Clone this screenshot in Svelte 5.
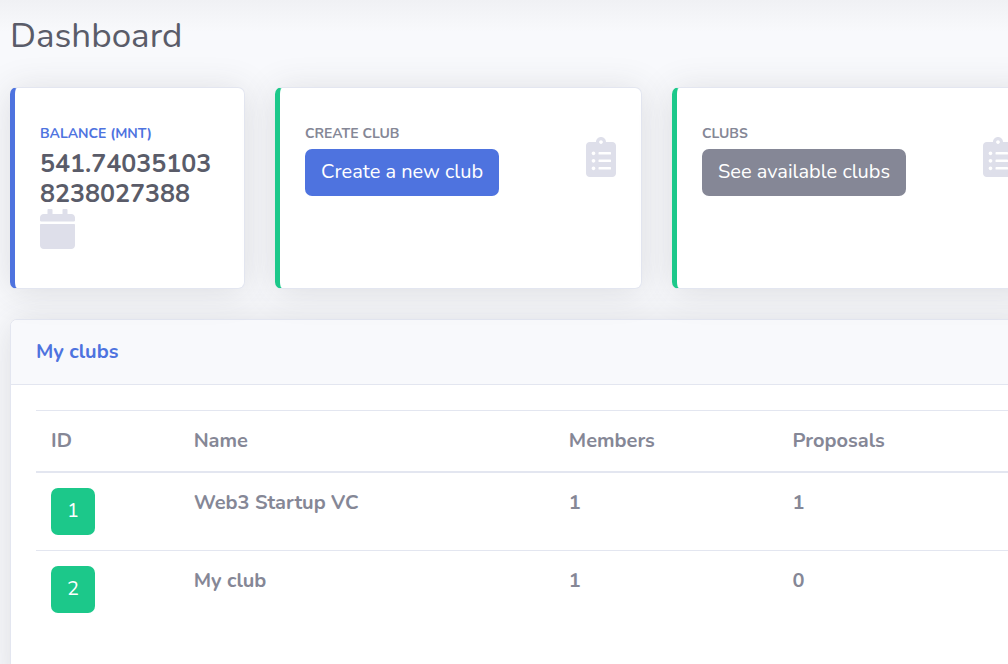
<script>
  const clubs = [
    { id: 1, name: 'Web3 Startup VC', members: 1, proposals: 1 },
    { id: 2, name: 'My club', members: 1, proposals: 0 }
  ];
</script>

{#snippet clipboard()}
  <svg class="icon clip" viewBox="0 0 384 512" aria-hidden="true">
    <path fill-rule="evenodd" d="M336 64h-80c0-35.300-28.700-64-64-64s-64 28.700-64 64H48C21.500 64 0 85.500 0 112v352c0 26.500 21.500 48 48 48h288c26.500 0 48-21.500 48-48V112c0-26.500-21.500-48-48-48zM96 424c-13.300 0-24-10.700-24-24s10.700-24 24-24 24 10.700 24 24-10.700 24-24 24zm0-96c-13.300 0-24-10.700-24-24s10.700-24 24-24 24 10.700 24 24-10.700 24-24 24zm0-96c-13.300 0-24-10.700-24-24s10.700-24 24-24 24 10.700 24 24-10.700 24-24 24zm96-192c13.300 0 24 10.700 24 24s-10.700 24-24 24-24-10.700-24-24 10.700-24 24-24zm128 368c0 4.400-3.600 8-8 8H168c-4.400 0-8-3.600-8-8v-16c0-4.400 3.600-8 8-8h144c4.400 0 8 3.600 8 8v16zm0-96c0 4.400-3.600 8-8 8H168c-4.400 0-8-3.600-8-8v-16c0-4.400 3.600-8 8-8h144c4.400 0 8 3.600 8 8v16zm0-96c0 4.400-3.600 8-8 8H168c-4.400 0-8-3.600-8-8v-16c0-4.400 3.600-8 8-8h144c4.400 0 8 3.600 8 8v16z" />
  </svg>
{/snippet}

<div class="page">
  <main>
    <h1>Dashboard</h1>

    <div class="cards">
      <section class="card stat primary">
        <div>
          <h2>Balance (MNT)</h2>
          <p class="amount">541.74035103<wbr />8238027388</p>
          <svg class="icon" viewBox="0 0 448 512" aria-hidden="true">
            <path d="M12 192h424c6.600 0 12 5.400 12 12v260c0 26.500-21.500 48-48 48H48c-26.500 0-48-21.500-48-48V204c0-6.600 5.400-12 12-12zm436-44v-36c0-26.500-21.500-48-48-48h-48V12c0-6.600-5.400-12-12-12h-40c-6.600 0-12 5.400-12 12v52H160V12c0-6.600-5.400-12-12-12h-40c-6.600 0-12 5.400-12 12v52H48C21.500 64 0 85.500 0 112v36c0 6.600 5.400 12 12 12h424c6.600 0 12-5.400 12-12z" />
          </svg>
        </div>
      </section>

      <section class="card stat success">
        <div>
          <h2>Create club</h2>
          <button class="btn blue" type="button">Create a new club</button>
        </div>
        {@render clipboard()}
      </section>

      <section class="card stat success">
        <div>
          <h2>Clubs</h2>
          <button class="btn gray" type="button">See available clubs</button>
        </div>
        {@render clipboard()}
      </section>
    </div>

    <section class="card clubs">
      <h2>My clubs</h2>
      <div class="body">
        <table>
          <colgroup>
            <col class="c-id" /><col class="c-name" /><col class="c-members" /><col />
          </colgroup>
          <thead>
            <tr><th>ID</th><th>Name</th><th>Members</th><th>Proposals</th></tr>
          </thead>
          <tbody>
            {#each clubs as club (club.id)}
              <tr>
                <td><button class="btn green" type="button">{club.id}</button></td>
                <td>{club.name}</td>
                <td>{club.members}</td>
                <td>{club.proposals}</td>
              </tr>
            {/each}
          </tbody>
        </table>
      </div>
    </section>
  </main>
</div>

<style>
  :global(body) {
    margin: 0;
    background: #f8f9fc;
  }
  .page {
    overflow: hidden;
    min-height: 100vh;
    font-family: Nunito, 'Open Sans', sans-serif;
    font-size: 20px;
    line-height: 30px;
    color: #858796;
    background: linear-gradient(#f0f1f4, #f8f9fc 32px);
  }
  main {
    margin-right: -31px;
    padding: 14px 0 0 10px;
  }
  h1, h2, p {
    margin: 0;
  }
  h1 {
    font-size: 35px;
    line-height: 43px;
    font-weight: 400;
    color: #5a5c69;
  }
  .cards {
    display: grid;
    grid-template-columns: 235fr 367fr 367fr;
    gap: 30px;
    margin: 30px 0;
  }
  .card {
    box-sizing: border-box;
    background: #fff;
    border: 1px solid #e3e6f0;
    border-radius: 7px;
    box-shadow: 0 3px 35px rgba(58, 59, 69, 0.15);
  }
  .stat {
    display: flex;
    align-items: flex-start;
    justify-content: space-between;
    padding: 35px 25px 39px;
    border-left-width: 5px;
  }
  .primary {
    border-left-color: #4e73df;
  }
  .success {
    border-left-color: #1cc88a;
  }
  .stat h2 {
    margin-bottom: 5px;
    font-size: 14px;
    line-height: 21px;
    font-weight: 700;
    text-transform: uppercase;
  }
  .primary h2 {
    color: #4e73df;
  }
  .amount {
    font-size: 25px;
    line-height: 30px;
    font-weight: 700;
    color: #5a5c69;
  }
  .icon {
    display: block;
    height: 40px;
    fill: #dedfea;
  }
  .clip {
    margin-top: 14px;
  }
  .btn {
    display: block;
    padding: 7px 15px 8px;
    border: 1px solid transparent;
    border-radius: 7px;
    font: inherit;
    font-weight: 400;
    line-height: 30px;
    color: #fff;
    cursor: pointer;
  }
  .blue {
    background: #4e73df;
  }
  .gray {
    background: #858796;
  }
  .green {
    background: #1cc88a;
  }
  .clubs h2 {
    padding: 17px 25px;
    font-size: 20px;
    line-height: 30px;
    font-weight: 700;
    color: #4e73df;
    background: #f8f9fc;
    border-bottom: 1px solid #e3e6f0;
    border-radius: 6px 6px 0 0;
  }
  .body {
    padding: 25px 25px 60px;
  }
  table {
    width: 100%;
    table-layout: fixed;
    border-collapse: separate;
    border-spacing: 0;
  }
  .c-id {
    width: 14.6%;
  }
  .c-name {
    width: 38.4%;
  }
  .c-members {
    width: 22.9%;
  }
  th, td {
    padding: 15px;
    text-align: left;
    vertical-align: top;
    font-weight: 700;
  }
  th {
    border-top: 1px solid #e3e6f0;
    border-bottom: 2px solid #e3e6f0;
  }
  tbody tr + tr td {
    border-top: 1px solid #e3e6f0;
  }
</style>
